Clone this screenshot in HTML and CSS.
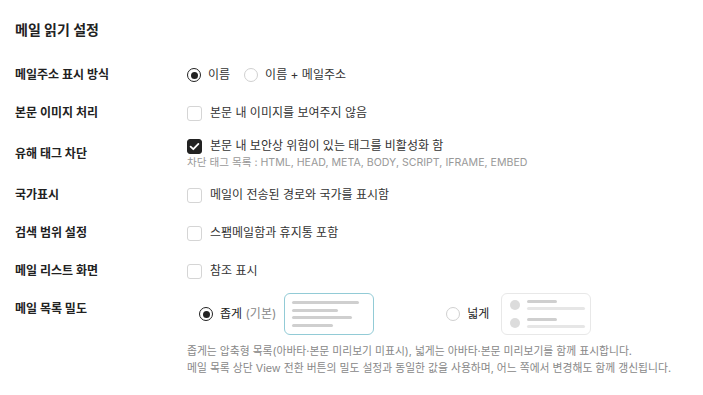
FILE: index.html
```html
<!DOCTYPE html>
<html lang="ko">
<head>
<meta charset="utf-8">
<title>메일 읽기 설정</title>
<link rel="stylesheet" href="styles.css">
</head>
<body>
<div class="page">
  <h1 class="title">메일 읽기 설정</h1>

  <div class="rows">
    <div class="row">
      <div class="label">메일주소 표시 방식</div>
      <div class="control">
        <label class="opt"><span class="radio is-on"></span>이름</label>
        <label class="opt"><span class="radio"></span>이름 + 메일주소</label>
      </div>
    </div>

    <div class="row">
      <div class="label">본문 이미지 처리</div>
      <div class="control">
        <label class="opt"><span class="check"></span>본문 내 이미지를 보여주지 않음</label>
      </div>
    </div>

    <div class="row row--tall">
      <div class="label">유해 태그 차단</div>
      <div class="control control--stack">
        <label class="opt"><span class="check is-on"><svg viewBox="0 0 15 15" width="15" height="15"><path d="M3.6 7.6 L6.3 10.2 L11.4 4.9" fill="none" stroke="#fff" stroke-width="1.8" stroke-linecap="round" stroke-linejoin="round"/></svg></span>본문 내 보안상 위험이 있는 태그를 비활성화 함</label>
        <div class="sub">차단 태그 목록 : HTML, HEAD, META, BODY, SCRIPT, IFRAME, EMBED</div>
      </div>
    </div>

    <div class="row">
      <div class="label">국가표시</div>
      <div class="control">
        <label class="opt"><span class="check"></span>메일이 전송된 경로와 국가를 표시함</label>
      </div>
    </div>

    <div class="row">
      <div class="label">검색 범위 설정</div>
      <div class="control">
        <label class="opt"><span class="check"></span>스팸메일함과 휴지통 포함</label>
      </div>
    </div>

    <div class="row">
      <div class="label">메일 리스트 화면</div>
      <div class="control">
        <label class="opt"><span class="check"></span>참조 표시</label>
      </div>
    </div>

    <div class="row row--density">
      <div class="label">메일 목록 밀도</div>
      <div class="density">
        <div class="density-opts">
          <div class="dopt">
            <span class="radio is-on"></span>
            <span class="dtext">좁게 <span class="muted">(기본)</span></span>
            <div class="preview preview--on">
              <span class="pl pl-1"></span>
              <span class="pl pl-2"></span>
              <span class="pl pl-3"></span>
              <span class="pl pl-4"></span>
            </div>
          </div>
          <div class="dopt dopt--wide">
            <span class="radio"></span>
            <span class="dtext">넓게</span>
            <div class="preview preview--wide">
              <div class="wrow">
                <span class="avatar"></span>
                <div class="wlines"><span class="wl wl-short"></span><span class="wl wl-long"></span></div>
              </div>
              <div class="wrow">
                <span class="avatar"></span>
                <div class="wlines"><span class="wl wl-short"></span><span class="wl wl-long"></span></div>
              </div>
            </div>
          </div>
        </div>
        <p class="desc">좁게는 압축형 목록(아바타·본문 미리보기 미표시), 넓게는 아바타·본문 미리보기를 함께 표시합니다.<br>메일 목록 상단 View 전환 버튼의 밀도 설정과 동일한 값을 사용하며, 어느 쪽에서 변경해도 함께 갱신됩니다.</p>
      </div>
    </div>
  </div>
</div>
</body>
</html>
```

FILE: styles.css
```css
* { box-sizing: border-box; }
html, body { margin: 0; padding: 0; background: #fff; }
body {
  font-family: Inter, "Noto Sans CJK KR", sans-serif;
  color: #222;
  font-size: 12px;
}
.page { padding: 21px 0 0 15px; }
.title {
  margin: 0;
  font-size: 14px;
  line-height: 18px;
  font-weight: 700;
  color: #222;
}
.rows { margin-top: 17px; }
.row {
  display: flex;
  align-items: center;
  padding: 10px 0;
}
.row--tall { padding: 5px 0; }
.label {
  width: 172px;
  flex: none;
  font-weight: 700;
  line-height: 18px;
  color: #222;
}
.control {
  display: flex;
  align-items: center;
  gap: 14px;
}
.control--stack { flex-direction: column; align-items: flex-start; gap: 0; }
.opt {
  display: flex;
  align-items: center;
  gap: 7px;
  line-height: 18px;
  color: #333;
}
.radio {
  width: 14px;
  height: 14px;
  border-radius: 50%;
  border: 1px solid #d0d0d0;
  background: #fff;
  flex: none;
  position: relative;
}
.radio.is-on { border: 1.6px solid #222; }
.radio.is-on::after {
  content: "";
  position: absolute;
  left: 50%;
  top: 50%;
  width: 7px;
  height: 7px;
  margin: -3.5px 0 0 -3.5px;
  border-radius: 50%;
  background: #222;
}
.check {
  width: 15px;
  height: 15px;
  border-radius: 3px;
  border: 1px solid #d5d5d5;
  background: #fff;
  flex: none;
  margin-right: 1px;
}
.check.is-on { background: #222; border-color: #222; }
.check svg { display: block; margin: -1px; }
.sub {
  font-size: 10.6px;
  line-height: 16px;
  color: #999;
}
.row--density { align-items: flex-start; padding: 3px 0 0; }
.row--density .label { padding-top: 7px; }
.density { display: flex; flex-direction: column; }
.density-opts {
  display: flex;
  align-items: center;
  padding-left: 12px;
  gap: 72px;
}
.dopt { display: flex; align-items: center; gap: 7px; }
.dtext { line-height: 18px; color: #222; margin-right: 1px; }
.muted { color: #888; }
.preview {
  width: 90px;
  height: 42px;
  border-radius: 6px;
  flex: none;
}
.preview--on {
  border: 1.5px solid #92cbd6;
  padding: 7px 0 0 7px;
  display: flex;
  flex-direction: column;
  gap: 4.5px;
}
.pl { display: block; height: 3px; border-radius: 2px; background: #cfcfcf; }
.pl-1 { width: 67px; }
.pl-2 { width: 46px; }
.pl-3 { width: 60px; }
.pl-4 { width: 41px; }
.preview--wide {
  margin-left: 4px;
  border: 1px solid #e8e8e8;
  padding: 6px 0 0 8px;
  display: flex;
  flex-direction: column;
  gap: 8px;
}
.wrow { display: flex; align-items: center; gap: 7px; }
.avatar { width: 10px; height: 10px; border-radius: 50%; background: #dcdcdc; flex: none; }
.wlines { display: flex; flex-direction: column; gap: 4px; }
.wl { display: block; height: 3px; border-radius: 2px; }
.wl-short { width: 30px; background: #cfcfcf; }
.wl-long { width: 58px; background: #e6e6e6; }
.desc {
  margin: 8px 0 0;
  font-size: 10.8px;
  line-height: 17px;
  color: #888;
}
```
